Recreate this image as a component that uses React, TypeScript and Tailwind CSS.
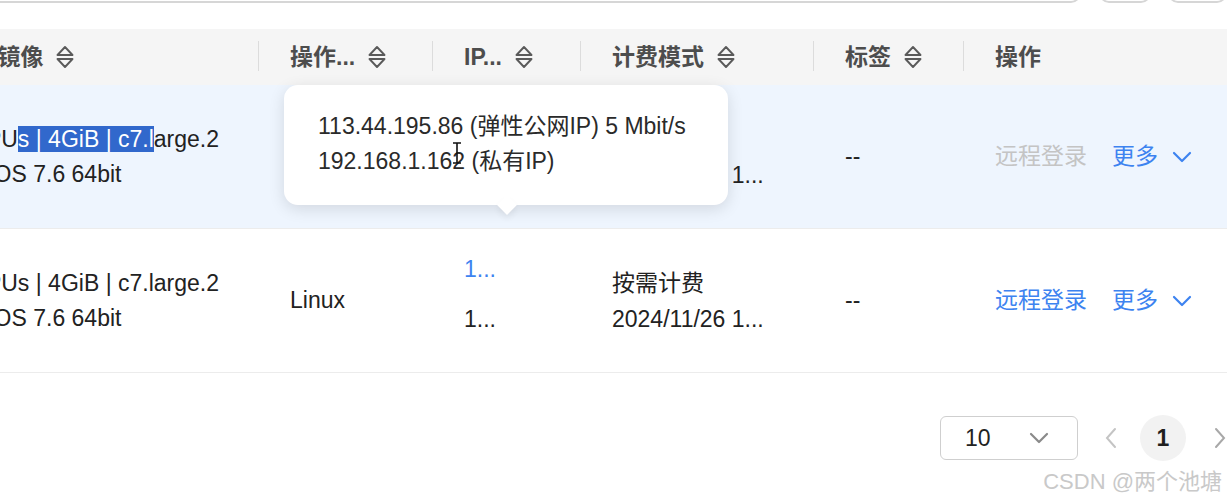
const SortIcon = () => (
  <svg width="20" height="26" viewBox="0 0 20 26" fill="none" stroke="#5a5a5a" strokeWidth="1.9" strokeLinejoin="round">
    <path d="M2.5 11 L10 3 L17.5 11 Z" />
    <path d="M2.5 15 L10 23 L17.5 15 Z" />
  </svg>
)

const Chevron = ({ color = "#3d83f0", w = 20 }: { color?: string; w?: number }) => (
  <svg width={w} height="12" viewBox="0 0 20 12" fill="none" stroke={color} strokeWidth="2.2" strokeLinecap="round" strokeLinejoin="round">
    <path d="M2 2 L10 10 L18 2" />
  </svg>
)

const Head = ({ label, sort = true, sep = true }: { label: string; sort?: boolean; sep?: boolean }) => (
  <div className="relative flex items-center h-full pl-[32px] gap-[12px]">
    {sep && <div className="absolute left-0 top-[12px] bottom-[14px] w-px bg-[#dcdcdc]" />}
    <span>{label}</span>
    {sort && <SortIcon />}
  </div>
)

const Actions = ({ disabled }: { disabled?: boolean }) => (
  <div className="flex items-center pl-[32px]">
    <span className={disabled ? "text-[#c4c4c4]" : "text-[#3d83f0]"}>远程登录</span>
    <span className="ml-[25px] text-[#3d83f0]">更多</span>
    <span className="ml-[14px]"><Chevron /></span>
  </div>
)

const Row = ({ active }: { active?: boolean }) => (
  <div className={`grid grid-cols-[345px_174px_148px_233px_150px_300px] h-[144px] border-b border-[#ececec] ${active ? "bg-[#eef5fe]" : "bg-white"}`}>
    <div className="flex flex-col justify-center pl-[32px] leading-[35px]">
      {active ? (
        <div>
          2vCPU<span className="bg-[#3168cc] text-white">s | 4GiB | c7.l</span>arge.2
        </div>
      ) : (
        <div>2vCPUs | 4GiB | c7.large.2</div>
      )}
      <div>CentOS 7.6 64bit</div>
    </div>
    <div className="flex items-center pl-[32px]">Linux</div>
    <div className="flex flex-col justify-center pl-[32px] pb-[14px] gap-[16px] leading-[34px]">
      <div className="text-[#3d83f0]">1...</div>
      <div>1...</div>
    </div>
    <div className="flex flex-col justify-center pl-[32px] leading-[36px]">
      <div>按需计费</div>
      <div>2024/11/26 1...</div>
    </div>
    <div className="flex items-center pl-[32px]">--</div>
    <Actions disabled={active} />
  </div>
)

export default function App() {
  return (
    <div
      className="relative w-[1227px] h-[503px] overflow-hidden bg-white text-[23px] text-[#222222]"
      style={{ fontFamily: '"Liberation Sans", "Noto Sans CJK SC", sans-serif' }}
    >
      <div className="flex h-[40px] -mt-[37px]">
        <div className="-ml-[20px] w-[1112px] border-2 border-[#d6d6d6] rounded-[10px]" />
        <div className="ml-[18px] w-[52px] border-2 border-[#d6d6d6] rounded-[10px]" />
        <div className="ml-[17px] w-[60px] border-2 border-[#d6d6d6] rounded-[10px]" />
      </div>

      <div className="mt-[26px] -ml-[87px]">
        <div className="grid grid-cols-[345px_174px_148px_233px_150px_300px] h-[56px] bg-[#f5f5f5] font-semibold text-[#4d4d4d]">
          <Head label="规格/镜像" sep={false} />
          <Head label="操作..." />
          <Head label="IP..." />
          <Head label="计费模式" />
          <Head label="标签" />
          <Head label="操作" sort={false} />
        </div>
        <Row active />
        <Row />
      </div>

      <div className="flex items-center mt-[42px] ml-[940px]">
        <div className="flex items-center justify-between w-[138px] h-[44px] border border-[#cfcfcf] rounded-[6px] pl-[24px] pr-[28px]">
          <span>10</span>
          <Chevron color="#8a8a8a" w={20} />
        </div>
        <span className="ml-[26px] text-[#c4c4c4]">
          <svg width="14" height="24" viewBox="0 0 14 24" fill="none" stroke="currentColor" strokeWidth="2" strokeLinecap="round">
            <path d="M11 3 L3 12 L11 21" />
          </svg>
        </span>
        <div className="ml-[22px] w-[46px] h-[46px] rounded-full bg-[#f2f2f2] flex items-center justify-center font-bold text-[#1f1f1f]">1</div>
        <span className="ml-[27px] text-[#a8a8a8]">
          <svg width="14" height="24" viewBox="0 0 14 24" fill="none" stroke="currentColor" strokeWidth="2" strokeLinecap="round">
            <path d="M3 3 L11 12 L3 21" />
          </svg>
        </span>
      </div>

      <div className="absolute left-[284px] top-[85px] w-[444px] h-[120px] bg-white rounded-[14px] shadow-[0_4px_16px_rgba(0,0,0,0.12)] pl-[34px] pt-[24px] leading-[35px] text-[#2a2a2a]">
        <div>113.44.195.86 (弹性公网IP) 5 Mbit/s</div>
        <div>192.168.1.162 (私有IP)</div>
        <svg className="absolute left-[168px] top-[57px]" width="10" height="22" viewBox="0 0 10 22" fill="none" stroke="#111" strokeWidth="1.6">
          <path d="M1 1 H9 M5 1 V21 M1 21 H9" />
        </svg>
        <div className="absolute left-[216px] -bottom-[7px] w-[14px] h-[14px] bg-white rotate-45 shadow-[3px_3px_6px_rgba(0,0,0,0.06)]" />
      </div>

      <div className="absolute right-[5px] bottom-[5px] text-[22px] text-[#c9c9c9]">CSDN @两个池塘</div>
    </div>
  )
}
